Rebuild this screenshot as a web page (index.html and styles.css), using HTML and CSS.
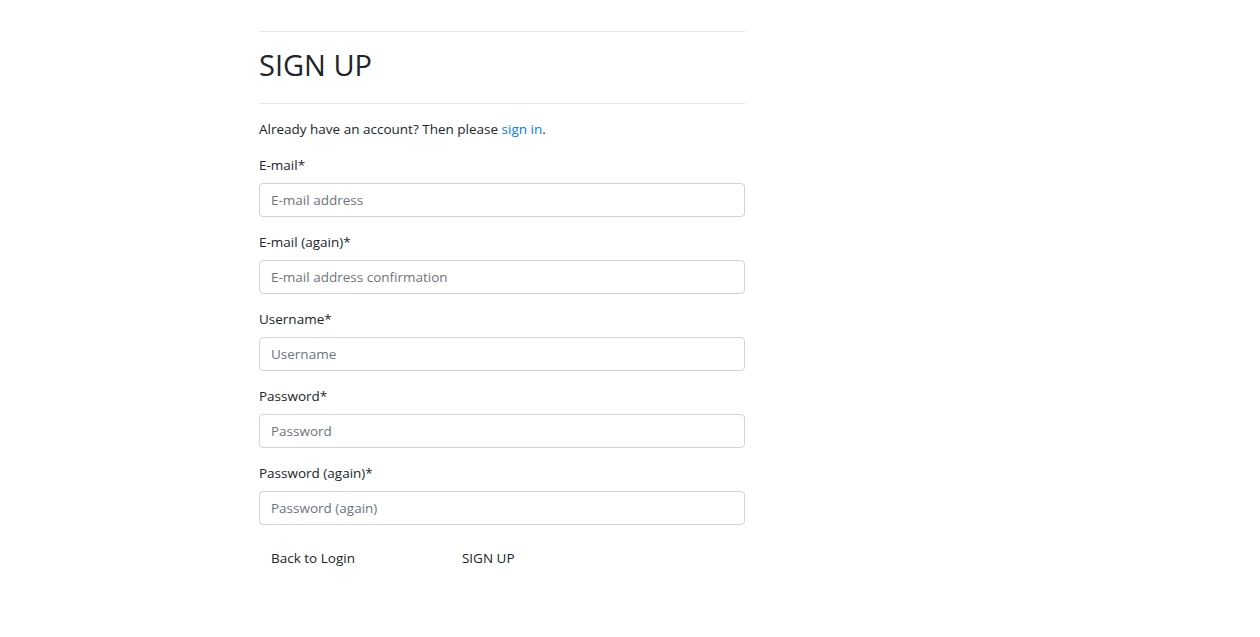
FILE: index.html
```html
<!DOCTYPE html>
<html>
<head>
<meta charset="utf-8">
<link rel="stylesheet" href="styles.css">
</head>
<body>
<div class="wrap">
  <hr class="rule">
  <h1 class="title">SIGN UP</h1>
  <hr class="rule">
  <p class="intro">Already have an account? Then please <a href="#" class="link">sign in</a>.</p>
  <form class="form">
    <div class="group">
      <label class="label">E-mail*</label>
      <input class="control" type="email" placeholder="E-mail address">
    </div>
    <div class="group">
      <label class="label">E-mail (again)*</label>
      <input class="control" type="email" placeholder="E-mail address confirmation">
    </div>
    <div class="group">
      <label class="label">Username*</label>
      <input class="control" type="text" placeholder="Username">
    </div>
    <div class="group">
      <label class="label">Password*</label>
      <input class="control" type="password" placeholder="Password">
    </div>
    <div class="group">
      <label class="label">Password (again)*</label>
      <input class="control" type="password" placeholder="Password (again)">
    </div>
    <div class="actions">
      <a href="#" class="btn btn-back">Back to Login</a>
      <button type="submit" class="btn btn-submit">SIGN UP</button>
    </div>
  </form>
</div>
</body>
</html>
```

FILE: styles.css
```css
* { box-sizing: border-box; }
html, body { margin: 0; padding: 0; background: #fff; }
body {
  font-family: "Open Sans", "Noto Sans", sans-serif;
  font-size: 13.5px;
  color: #212529;
}
.wrap {
  width: 486px;
  margin-left: 259px;
  padding-top: 31px;
}
.rule {
  border: 0;
  border-top: 1px solid rgba(0,0,0,0.1);
  margin: 0;
}
.title {
  font-size: 29px;
  font-weight: 400;
  line-height: 35px;
  margin: 0;
  padding: 15px 0 21px;
  letter-spacing: 0;
}
.intro {
  margin: 16px 0 0;
  line-height: 19px;
}
.link { color: #007bff; text-decoration: none; }
.form { margin-top: 17px; }
.group { margin-bottom: 16px; }
.label {
  display: block;
  line-height: 19px;
  margin-bottom: 8px;
}
.control {
  display: block;
  width: 100%;
  height: 34px;
  padding: 6px 11px;
  font-family: inherit;
  font-size: 13.5px;
  color: #495057;
  background: #fff;
  border: 1px solid #ced4da;
  border-radius: 4px;
  outline: none;
}
.control::placeholder { color: #6c757d; opacity: 1; }
.actions {
  display: flex;
  align-items: center;
  padding-top: 1px;
}
.btn {
  font-family: inherit;
  font-size: 13.5px;
  color: #212529;
  background: transparent;
  border: 0;
  padding: 6px 12px;
  line-height: 20px;
  text-decoration: none;
  cursor: pointer;
}
.btn-submit { margin-left: 83px; }
```
